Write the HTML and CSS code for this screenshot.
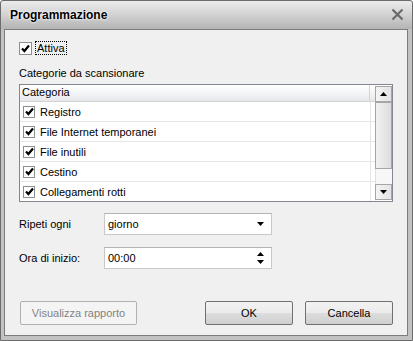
FILE: index.html
```html
<!DOCTYPE html>
<html lang="it">
<head>
    <meta charset="UTF-8">
    <title>Programmazione</title>
    <link rel="stylesheet" href="styles.css">
</head>
<body>
    <div class="window">
        <div class="titlebar">
            <span class="title">Programmazione</span>
            <svg class="close" width="13" height="13" viewBox="0 0 13 13">
                <path d="M1.5 1.5 L11.5 11.5 M11.5 1.5 L1.5 11.5" stroke="#6a6a6a" stroke-width="2.2" fill="none"/>
            </svg>
        </div>

        <div class="client">
            <label class="check-row">
                <span class="checkbox"><svg width="9" height="9" viewBox="0 0 9 9"><path d="M1 4.5 L3.4 7 L8 1.5" stroke="#000" stroke-width="2.2" fill="none"/></svg></span>
                <span class="focus">Attiva</span>
            </label>

            <div class="section-label">Categorie da scansionare</div>

            <div class="listbox">
                <div class="grid">
                    <div class="grid-header"><span class="col">Categoria</span><span class="col-rest"></span></div>
                    <div class="grid-row"><span class="col"><span class="checkbox"><svg width="9" height="9" viewBox="0 0 9 9"><path d="M1 4.5 L3.4 7 L8 1.5" stroke="#000" stroke-width="2.2" fill="none"/></svg></span>Registro</span></div>
                    <div class="grid-row"><span class="col"><span class="checkbox"><svg width="9" height="9" viewBox="0 0 9 9"><path d="M1 4.5 L3.4 7 L8 1.5" stroke="#000" stroke-width="2.2" fill="none"/></svg></span>File Internet temporanei</span></div>
                    <div class="grid-row"><span class="col"><span class="checkbox"><svg width="9" height="9" viewBox="0 0 9 9"><path d="M1 4.5 L3.4 7 L8 1.5" stroke="#000" stroke-width="2.2" fill="none"/></svg></span>File inutili</span></div>
                    <div class="grid-row"><span class="col"><span class="checkbox"><svg width="9" height="9" viewBox="0 0 9 9"><path d="M1 4.5 L3.4 7 L8 1.5" stroke="#000" stroke-width="2.2" fill="none"/></svg></span>Cestino</span></div>
                    <div class="grid-row"><span class="col"><span class="checkbox"><svg width="9" height="9" viewBox="0 0 9 9"><path d="M1 4.5 L3.4 7 L8 1.5" stroke="#000" stroke-width="2.2" fill="none"/></svg></span>Collegamenti rotti</span></div>
                </div>
                <div class="scrollbar">
                    <div class="sb-btn"><svg width="7" height="4" viewBox="0 0 7 4"><path d="M0 4 L3.5 0 L7 4 Z" fill="#000"/></svg></div>
                    <div class="sb-thumb"></div>
                    <div class="sb-track"></div>
                    <div class="sb-btn"><svg width="7" height="4" viewBox="0 0 7 4"><path d="M0 0 L3.5 4 L7 0 Z" fill="#000"/></svg></div>
                </div>
            </div>

            <div class="field-row first">
                <span class="field-label">Ripeti ogni</span>
                <div class="input">
                    <span>giorno</span>
                    <svg width="7" height="4" viewBox="0 0 7 4"><path d="M0 0 L3.5 4 L7 0 Z" fill="#000"/></svg>
                </div>
            </div>

            <div class="field-row">
                <span class="field-label">Ora di inizio:</span>
                <div class="input">
                    <span>00:00</span>
                    <span class="spin">
                        <svg width="7" height="4" viewBox="0 0 7 4"><path d="M0 4 L3.5 0 L7 4 Z" fill="#000"/></svg>
                        <svg width="7" height="4" viewBox="0 0 7 4"><path d="M0 0 L3.5 4 L7 0 Z" fill="#000"/></svg>
                    </span>
                </div>
            </div>

            <div class="buttons">
                <button class="btn wide" disabled>Visualizza rapporto</button>
                <span class="spacer"></span>
                <button class="btn">OK</button>
                <button class="btn">Cancella</button>
            </div>
        </div>
    </div>
</body>
</html>
```

FILE: styles.css
```css
* {
    margin: 0;
    padding: 0;
    box-sizing: border-box;
}

body {
    font-family: 'Liberation Sans', Arial, sans-serif;
    font-size: 11px;
    color: #000;
    background: #fff;
    width: 413px;
    height: 341px;
    overflow: hidden;
}

.window {
    width: 413px;
    height: 341px;
    border: 1px solid #6c6c6c;
    border-radius: 3px 3px 0 0;
    background: #c2c2c2;
    padding: 0 4px 4px 3px;
    display: flex;
    flex-direction: column;
}

.titlebar {
    height: 28px;
    margin: 0 -4px 0 -3px;
    padding: 0 8px 0 9px;
    display: flex;
    align-items: center;
    justify-content: space-between;
    background: linear-gradient(#ececec 0%, #d4d4d4 45%, #b4b4b4 100%);
    border-radius: 3px 3px 0 0;
}

.title {
    font-weight: bold;
    font-size: 12px;
    text-shadow: 0 0 3px #fff, 0 0 2px #fff;
}

.close {
    margin-top: -1px;
}

.client {
    flex: 1;
    background: #f0f0f0;
    border: 1px solid #7c7c7c;
    padding: 11px 14px 0 14px;
    display: flex;
    flex-direction: column;
}

.check-row {
    display: flex;
    align-items: center;
    height: 14px;
}

.checkbox {
    width: 13px;
    height: 13px;
    border: 1px solid #8e8f8f;
    background: #fff;
    display: inline-flex;
    align-items: center;
    justify-content: center;
    flex-shrink: 0;
}

.focus {
    margin-left: 3px;
    padding: 0 1px;
    border: 1px dotted #000;
    line-height: 12px;
}

.section-label {
    margin-top: 11px;
    height: 14px;
    line-height: 14px;
}

.listbox {
    margin-top: 4px;
    height: 118px;
    border: 1px solid #828790;
    background: #fff;
    display: flex;
}

.grid {
    flex: 1;
    overflow: hidden;
}

.grid-header {
    height: 17px;
    display: flex;
    background: linear-gradient(#ffffff, #f1f2f4 60%, #e5e7ea);
    border-bottom: 1px solid #d5d5d5;
}

.grid-header .col {
    width: 350px;
    padding-left: 2px;
    line-height: 15px;
    border-right: 1px solid #d5d5d5;
}

.col-rest {
    flex: 1;
}

.grid-row {
    height: 20px;
    display: flex;
    border-bottom: 1px solid #e6e6e6;
}

.grid-row .col {
    width: 351px;
    padding-left: 3px;
    display: flex;
    align-items: center;
    gap: 5px;
    border-right: 1px solid #e6e6e6;
}

.grid-row .checkbox {
    width: 12px;
    height: 12px;
}

.scrollbar {
    width: 17px;
    margin: 1px 0 1px 0;
    display: flex;
    flex-direction: column;
    background: #f7f7f7;
}

.sb-btn {
    height: 16px;
    border: 1px solid #a5a5a5;
    background: linear-gradient(90deg, #f4f4f4, #e4e4e4);
    display: flex;
    align-items: center;
    justify-content: center;
}

.sb-thumb {
    height: 67px;
    border: 1px solid #a5a5a5;
    background: linear-gradient(90deg, #f2f2f2, #dcdcdc);
}

.sb-track {
    flex: 1;
    border-left: 1px solid #e0e0e0;
}

.field-row {
    margin-top: 12px;
    display: flex;
    align-items: center;
    height: 22px;
}

.field-row.first {
    margin-top: 11px;
}

.field-label {
    width: 85px;
}

.input {
    width: 168px;
    height: 22px;
    border: 1px solid #c8c8c8;
    border-top-color: #b4b4b4;
    background: #fff;
    display: flex;
    align-items: center;
    justify-content: space-between;
    padding: 0 7px 0 3px;
}

.spin {
    display: flex;
    flex-direction: column;
    gap: 4px;
}

.buttons {
    margin-top: 32px;
    display: flex;
    gap: 12px;
    padding-left: 1px;
}

.spacer {
    flex: 1;
}

.btn {
    width: 88px;
    height: 24px;
    font-family: inherit;
    font-size: 11px;
    color: #000;
    border: 1px solid #707070;
    border-radius: 2px;
    background: linear-gradient(#f2f2f2 0%, #ebebeb 50%, #dddddd 51%, #cfcfcf 100%);
}

.btn.wide {
    width: 117px;
    color: #838383;
    border-color: #adb2b5;
    background: #f4f4f4;
}
```
